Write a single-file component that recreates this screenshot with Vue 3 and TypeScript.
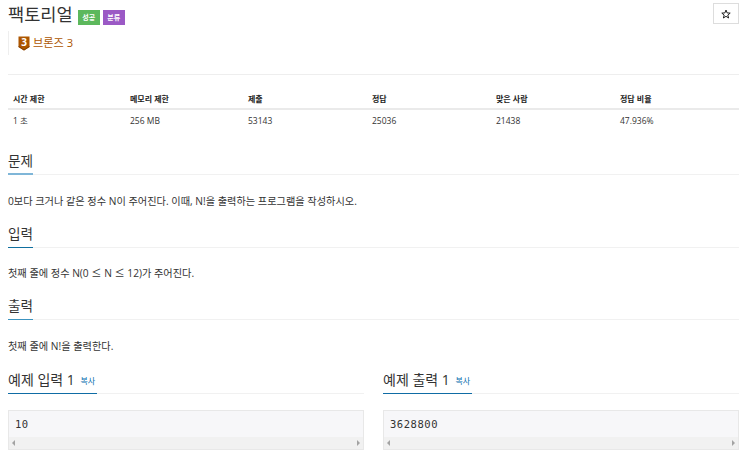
<script setup lang="ts">
const heads: string[] = ['시간 제한', '메모리 제한', '제출', '정답', '맞은 사람', '정답 비율']
const vals: string[] = ['1 초', '256 MB', '53143', '25036', '21438', '47.936%']
const sections = [
  { title: '문제', parts: ['0보다 크거나 같은 정수 N이 주어진다. 이때, N!을 출력하는 프로그램을 작성하시오.'], cls: 's1' },
  { title: '입력', parts: ['첫째 줄에 정수 N(0 ', '≤', ' N ', '≤', ' 12)가 주어진다.'], cls: 's2' },
  { title: '출력', parts: ['첫째 줄에 N!을 출력한다.'], cls: 's3' },
]
const samples = [
  { title: '예제 입력 1', value: '10' },
  { title: '예제 출력 1', value: '3628800' },
]
</script>

<template>
  <div class="page">
    <header class="top">
      <div class="title-row">
        <h1 class="title">팩토리얼</h1>
        <span class="label green">성공</span>
        <span class="label purple">분류</span>
      </div>
      <button class="star" type="button" aria-label="즐겨찾기">
        <svg width="10" height="10" viewBox="0 0 10 10">
          <path d="M5 1L6.1 3.9L9.2 4.1L6.8 6L7.6 9L5 7.3L2.4 9L3.2 6L0.8 4.1L3.9 3.9Z" fill="none" stroke="#222" stroke-width="1" />
        </svg>
      </button>
    </header>
    <div class="tier">
      <svg class="tier-icon" width="12" height="15" viewBox="0 0 12 15">
        <path d="M0.5 0.5H11.5V11L6 14.5L0.5 11Z" fill="#ad5600" />
        <path d="M0.5 10L6 13.5L11.5 10V11L6 14.5L0.5 11Z" fill="#7d3e00" />
        <text x="6" y="9.8" text-anchor="middle" class="tier-num">3</text>
      </svg>
      <span class="tier-text">브론즈 3</span>
    </div>
    <div class="rule"></div>
    <div class="stats">
      <div v-for="h in heads" :key="h" class="cell head">{{ h }}</div>
      <div v-for="v in vals" :key="v" class="cell val">{{ v }}</div>
    </div>
    <section v-for="s in sections" :key="s.title" class="sec" :class="s.cls">
      <div class="headline"><h2 class="h2">{{ s.title }}</h2></div>
      <p class="text"><span v-for="(p, i) in s.parts" :key="i" :class="{ wide: i % 2 === 1 }">{{ p }}</span></p>
    </section>
    <div class="samples">
      <div v-for="s in samples" :key="s.title" class="sample">
        <div class="headline">
          <h2 class="h2 dark">{{ s.title }} <span class="copy">복사</span></h2>
        </div>
        <div class="pre">
          <div class="code">{{ s.value }}</div>
          <div class="scroll">
            <span class="arr-l"></span>
            <span class="arr-r"></span>
          </div>
        </div>
      </div>
    </div>
  </div>
</template>

<style>
html, body { margin: 0; background: #fff; overflow: hidden; }
</style>

<style scoped>
.page {
  width: 750px;
  height: 456px;
  box-sizing: border-box;
  padding: 0 11px 0 8px;
  font-family: "Open Sans", "Noto Sans CJK KR", sans-serif;
  color: #333;
  overflow: hidden;
}
.top { display: flex; justify-content: space-between; align-items: flex-start; height: 31px; }
.title-row { display: flex; align-items: flex-start; }
.title { margin: 1px 0 0; font-size: 17.6px; font-weight: 400; line-height: 27px; height: 27px; color: #333; }
.label {
  margin-top: 10px;
  height: 15px;
  line-height: 15px;
  width: 22px;
  text-align: center;
  font-size: 7px;
  font-weight: 700;
  color: #fff;
}
.green { background: #5cb85c; margin-left: 5px; }
.purple { background: #9b59c5; margin-left: 3px; }
.star {
  display: flex;
  align-items: center;
  justify-content: center;
  margin: 3px 0 0 0;
  width: 26px;
  height: 21px;
  padding: 0;
  border: 1px solid #ddd;
  background: #fff;
}
.tier {
  display: flex;
  align-items: center;
  height: 24px;
  border-left: 1px solid #eee;
  padding-left: 9px;
  margin-bottom: 19px;
}
.tier-icon { display: block; margin-top: 1px; }
.tier-num { font: 700 10px "Open Sans", sans-serif; fill: #fff; }
.tier-text { margin-left: 3px; font-size: 11.2px; color: #ad5600; line-height: 16px; }
.rule { height: 1px; background: #eee; margin-bottom: 14px; }
.stats {
  display: grid;
  grid-template-columns: 117px 118px 124px 124px 124px 124px;
  font-size: 8px;
}
.cell { padding: 0 5px; }
.head { font-weight: 700; border-bottom: 2px solid #eaeaea; color: #222; height: 19px; line-height: 19px; }
.val { height: 21px; line-height: 21px; color: #333; font-size: 8.5px; }
.headline { border-bottom: 1px solid #f1f1f1; }
.h2 {
  display: inline-block;
  margin: 0 0 -1px;
  font-size: 13.6px;
  font-weight: 400;
  line-height: 20px;
  padding-bottom: 3px;
  border-bottom: 1px solid #0f7fb5;
  color: #333;
  vertical-align: top;
}
.s1 .h2 { border-bottom: 2px solid #7fb6d8; padding-bottom: 2px; }
.s2 .h2 { border-bottom-color: #0f6f9f; }
.s3 .h2 { border-bottom-color: #3c93bf; }
.h2.dark { border-bottom-color: #0f6ca5; font-size: 14px; padding-bottom: 2px; padding-right: 2px; }
.s1 { padding-top: 20px; }
.s2 { padding-top: 16px; }
.s3 { padding-top: 16px; }
.text { margin: 0; padding-top: 19px; font-size: 10.2px; line-height: 14px; height: 14px; color: #333; }
.s2 .text { padding-top: 18px; }
.wide { font-family: "Noto Sans CJK KR", sans-serif; }
.samples { display: flex; gap: 19px; margin-top: 17px; }
.sample { flex: 1 1 0; min-width: 0; }
.copy { font-size: 8px; color: #0b6fb0; margin-left: 2px; vertical-align: 1px; }
.pre {
  margin-top: 16px;
  border: 1px solid #e8e8e8;
  background: #f7f7f9;
  height: 38px;
}
.code { font-family: "DejaVu Sans Mono", monospace; font-size: 10.5px; letter-spacing: 0.55px; color: #333; line-height: 13px; padding: 7px 6px 6px; height: 13px; }
.scroll {
  height: 12px;
  background: #f1f1f1;
  display: flex;
  justify-content: space-between;
  align-items: center;
  padding: 0 3px;
}
.arr-l { border: 3px solid transparent; border-right: 3px solid #a3a3a3; border-left: 0; }
.arr-r { border: 3px solid transparent; border-left: 3px solid #a3a3a3; border-right: 0; }
</style>
